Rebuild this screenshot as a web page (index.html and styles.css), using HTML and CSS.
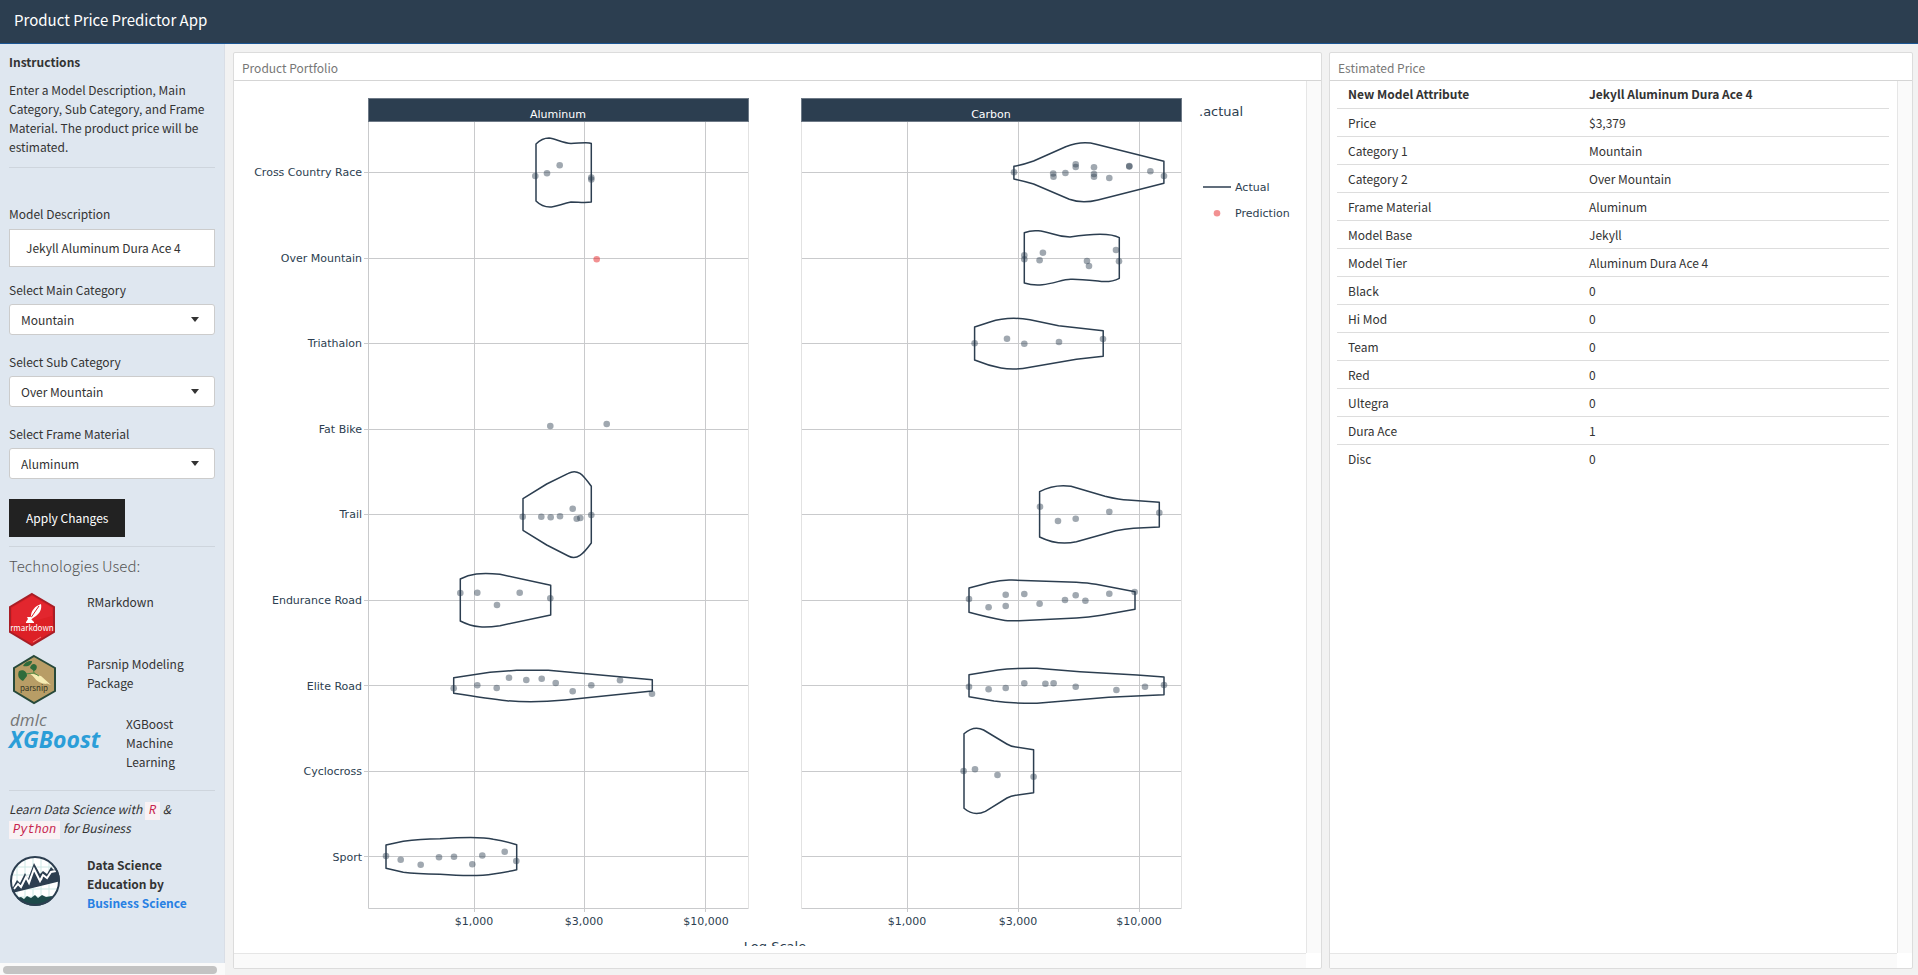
FILE: index.html
```html
<!DOCTYPE html>
<html lang="en">
<head>
<meta charset="utf-8">
<title>Product Price Predictor App</title>
<link rel="stylesheet" href="styles.css">
</head>
<body>
<header class="navbar"><h1 class="brand">Product Price Predictor App</h1></header>
<div class="layout">
  <aside class="sidebar">
    <div class="sidebar-body">
      <h2 class="heading">Instructions</h2>
      <p class="intro">Enter a Model Description, Main Category, Sub Category, and Frame Material. The product price will be estimated.</p>
      <hr class="rule">
      <form class="form">
        <div class="field field-first">
          <label for="model">Model Description</label>
          <input id="model" class="control text-control" type="text" value="Jekyll Aluminum Dura Ace 4">
        </div>
        <div class="field">
          <label for="main-cat">Select Main Category</label>
          <div class="select-wrap"><select id="main-cat" class="control"><option>Mountain</option></select></div>
        </div>
        <div class="field">
          <label for="sub-cat">Select Sub Category</label>
          <div class="select-wrap"><select id="sub-cat" class="control"><option>Over Mountain</option></select></div>
        </div>
        <div class="field">
          <label for="frame">Select Frame Material</label>
          <div class="select-wrap"><select id="frame" class="control"><option>Aluminum</option></select></div>
        </div>
        <button class="apply" type="button">Apply Changes</button>
      </form>
      <hr class="rule rule-tight">
      <h3 class="tech-title">Technologies Used:</h3>
      <div class="tech tech-r">
        <svg class="logo" width="48" height="54" viewBox="0 0 48 54" role="img" aria-label="rmarkdown">
          <path d="M23 2 45 15V40L23 53 1 40V15Z" fill="#dd2026" stroke="#a81e26" stroke-width="2"/>
          <path d="M3 16 23 4 43 16V24L3 35Z" fill="#e62c33" opacity=".6"/>
          <path d="M32 12C33 17 31 21 27 24L24 26 19 30 22 24C22 19 26 14 32 12Z" fill="#fff"/>
          <path d="M30 14 19 30" stroke="#dd2026" stroke-width="1"/>
          <path d="M18 25H23L22 27 25 30V31H17V30L19 27Z" fill="#fff"/>
          <path d="M24 50 32 45" stroke="#f08080" stroke-width="1"/>
          <text class="hex-text" x="23" y="39" text-anchor="middle" fill="#fff">rmarkdown</text>
        </svg>
        <span>RMarkdown</span>
      </div>
      <div class="tech tech-p">
        <svg class="logo" width="48" height="50" viewBox="0 0 48 50" role="img" aria-label="parsnip">
          <path d="M25 2 46 14V37L25 49 5 37V14Z" fill="#b89d66" stroke="#27493a" stroke-width="2"/>
          <path d="M20 19 32 22 42 31 29 26Z" fill="#f7edb4"/>
          <path d="M24 22Q28 20 32 23L38 30Q29 30 24 22Z" fill="#f7edb4"/>
          <path d="M30 22 25 19 16 20M25 19 24 13" fill="none" stroke="#4f8a43" stroke-width="1"/>
          <path d="M14 12C17 7 20 7 23 7 23 11 19 13 14 12ZM21 14C22 10 25 9 27 11 29 13 27 17 25 17ZM10 17C15 15 18 18 18 22L14 27C10 25 8 22 10 17Z" fill="#2f6b3b"/>
          <text class="hex-text" x="25" y="37" text-anchor="middle" fill="#333524">parsnip</text>
        </svg>
        <span>Parsnip Modeling Package</span>
      </div>
      <div class="tech tech-x">
        <svg class="logo" width="92" height="38" viewBox="0 0 92 38" role="img" aria-label="dmlc XGBoost">
          <text class="dmlc" x="1" y="12">dmlc</text>
          <text class="xgb" x="0" y="34">XGBoost</text>
        </svg>
        <span>XGBoost Machine Learning</span>
      </div>
      <hr class="rule rule-wide">
      <p class="learn">Learn Data Science with <code>R</code> &amp; <code>Python</code> for Business</p>
      <div class="tech tech-b">
        <svg class="logo" width="52" height="52" viewBox="0 0 52 52" role="img" aria-label="Business Science">
          <defs><clipPath id="disc"><circle cx="26" cy="26" r="25"/></clipPath></defs>
          <circle cx="26" cy="26" r="24" fill="#fff"/>
          <g clip-path="url(#disc)">
            <path d="M8 0V52M16 0V52M24 0V52M32 0V52M40 0V52M0 12H52M0 20H52M0 34H52M0 42H52" stroke="#cfe9e6" stroke-width="1"/>
            <path d="M3 34 8 25 11 28 16 18 19 24 25 8 31 19 34 16 38 19 42 12 45 15 52 9V26L3 38Z" fill="#2c3e50"/>
            <path d="M5 34 9 29 12 32 17 22 20 28 25 14 31 26 34 20 38 23 42 17 47 16M20 28 22 22M31 26 33 23" fill="none" stroke="#fff" stroke-width="2"/>
            <path d="M8 43 12 42 15 44 18 41 22 43 26 40 29 43 33 40 37 42 43 41 41 52H12Z" fill="#1d4a4a"/>
          </g>
          <circle cx="26" cy="26" r="24" fill="none" stroke="#2c3e50" stroke-width="2"/>
        </svg>
        <strong>Data Science Education by <a href="#">Business Science</a></strong>
      </div>
    </div>
    <div class="hscroll"><div class="hthumb"></div></div>
  </aside>
  <main class="panels">
    <section class="panel">
      <h2 class="panel-title">Product Portfolio</h2>
      <div class="panel-body">
        <svg class="chart" viewBox="234 81 1072 872" preserveAspectRatio="xMinYMin meet" role="img" aria-label="Product Portfolio">
          <defs><clipPath id="plot"><rect x="234" y="81" width="1072" height="865"/></clipPath></defs>
          <g class="grid">
            <path d="M364 172.500H748M364 258.500H748M364 343.500H748M364 429.500H748M364 514.500H748M364 600.500H748M364 685.500H748M364 771.500H748M364 856.500H748"/>
            <path d="M802 172.500H1181M802 258.500H1181M802 343.500H1181M802 429.500H1181M802 514.500H1181M802 600.500H1181M802 685.500H1181M802 771.500H1181M802 856.500H1181"/>
            <path d="M474.500 122V912M584.500 122V912M705.500 122V912M907.500 122V912M1018.500 122V912M1139.500 122V912"/>
            <path d="M368.500 122V908.500H748M802 908.500H1181"/>
            <path class="faint" d="M748.500 122V909M801.500 122V909M1181.500 122V909"/>
          </g>
          <g class="strip"><rect x="368.500" y="98.500" width="380" height="23"/><rect x="801.500" y="98.500" width="380" height="23"/></g>
          <g class="violin">
            <path d="M536 144C541 139 546 138 549 138C556 139 563 143 571 143.500C578 143.500 588 141.500 591.300 143.500V202C585 203 578 202 571 202C562 204 554 207 550 207C544 207 540 205 536 201Z"/>
            <path d="M523 498.700L546.700 484L568.300 473.300Q574.300 470 580 473.300Q584 476 591.300 486.300V543Q584 553 580 555.300Q574.300 559.500 568.300 556L546.700 545L523 530.300Z"/>
            <path d="M460.300 579C470 574 480 572.500 500 574.300L550.700 585.300V615L500 625.700C485 628 474 628 460.300 621Z"/>
            <path d="M453.700 677.700L490 672.300L516.700 670.300H548.300L652.300 679.700V691L565 700Q533 703 506.700 700.700Q490 699 453.700 693.300Z"/>
            <path d="M386 845L403.300 841.300Q420 839 440 838.700Q480 836 493.300 839.300Q505 841 516.700 844.700V869.700Q505 872.500 493.300 874Q476 877 440 874.300Q415 874 403.300 872.300L386 868.300Z"/>
            <path d="M1013.900 166.300Q1024 164.500 1033.600 161L1065.700 146.700Q1082 140.500 1096 144.300L1139 155L1163.900 161.300V183.300L1097.900 200Q1082 204 1069.300 199.300L1033.600 184Q1024 181 1013.900 179Z"/>
            <path d="M1024.300 232.700C1034 229 1042 231 1053 234Q1062 237 1070 237Q1108 231 1119.300 237.700V278.300Q1110 283 1098 281Q1077 279 1071 279.300C1060 279 1044 289 1024.300 283Z"/>
            <path d="M974.600 327L990 322Q1008 316 1030 319.700L1058.600 325.700L1103.200 330.700V356.300L1076.400 359.300L1030 367.300Q1014 370.500 1001 368Q988 365.500 974.600 360Z"/>
            <path d="M1039.600 491.700Q1054 484 1071 486.300L1105 496.300Q1120 500 1128 500L1159.300 502.300V527L1133.600 528.300Q1125 529 1115.700 530.700L1076.400 541.700Q1058 546 1039.600 537Z"/>
            <path d="M969 588L990 582.500Q1002 579.500 1012 580L1076.400 582.300Q1088 583 1096 584.300L1135 591.700V609.300L1101.400 615.300Q1088 617.500 1076.400 618L1019.300 620.700Q1008 621 1005 620.500Q990 618 969 612.300Z"/>
            <path d="M969 674.700L997.900 670Q1012 668 1037 668.300L1080 671.700L1137 675L1164 677V694.700L1108.600 697.300L1037 703.300Q1012 703.500 994 701L969 696.700Z"/>
            <path d="M964 733.700Q974 725 983.600 730L1006.800 744Q1011 746.500 1015.700 747L1033.600 749.700V792.700L1015.700 795.300Q1011 796 1007 798L985.400 811.300Q974 817 964 808.300Z"/>
          </g>
          <g class="dots">
            <circle cx="535.300" cy="176" r="3.300"/><circle cx="547" cy="173.300" r="3.300"/><circle cx="559.700" cy="165.300" r="3.300"/><circle cx="591.300" cy="177.500" r="3.300"/><circle cx="591.300" cy="179.500" r="3.300"/>
            <circle cx="550.300" cy="426" r="3.300"/><circle cx="606.700" cy="424" r="3.300"/>
            <circle cx="522.700" cy="516.700" r="3.300"/><circle cx="541.300" cy="516.700" r="3.300"/><circle cx="550.700" cy="517.300" r="3.300"/><circle cx="560" cy="516.300" r="3.300"/><circle cx="572.700" cy="508.700" r="3.300"/><circle cx="576.700" cy="518.700" r="3.300"/><circle cx="580.300" cy="518" r="3.300"/><circle cx="591.300" cy="515" r="3.300"/>
            <circle cx="460.300" cy="593" r="3.300"/><circle cx="477.300" cy="592.700" r="3.300"/><circle cx="497" cy="605" r="3.300"/><circle cx="519.700" cy="592.700" r="3.300"/><circle cx="550.300" cy="598.300" r="3.300"/>
            <circle cx="453.700" cy="688.300" r="3.300"/><circle cx="477.300" cy="685.300" r="3.300"/><circle cx="496.700" cy="688" r="3.300"/><circle cx="509" cy="677.700" r="3.300"/><circle cx="526.300" cy="680" r="3.300"/><circle cx="541.700" cy="678.700" r="3.300"/><circle cx="555.700" cy="683" r="3.300"/><circle cx="572.700" cy="691.300" r="3.300"/><circle cx="591.300" cy="685.300" r="3.300"/><circle cx="620" cy="680.300" r="3.300"/><circle cx="652" cy="693.700" r="3.300"/>
            <circle cx="386" cy="856" r="3.300"/><circle cx="400.700" cy="859.700" r="3.300"/><circle cx="420.700" cy="864.700" r="3.300"/><circle cx="439" cy="857.300" r="3.300"/><circle cx="454" cy="856.700" r="3.300"/><circle cx="472.300" cy="864.300" r="3.300"/><circle cx="482.300" cy="855.500" r="3.300"/><circle cx="504.700" cy="851.700" r="3.300"/><circle cx="516.300" cy="861" r="3.300"/>
            <circle cx="1014" cy="172.300" r="3.300"/><circle cx="1053.200" cy="173.500" r="3.300"/><circle cx="1053.500" cy="176.700" r="3.300"/><circle cx="1065.400" cy="173" r="3.300"/><circle cx="1075.700" cy="164.300" r="3.300"/><circle cx="1075.700" cy="167" r="3.300"/><circle cx="1094" cy="167.300" r="3.300"/><circle cx="1094" cy="174" r="3.300"/><circle cx="1094" cy="176.700" r="3.300"/><circle cx="1109.300" cy="178" r="3.300"/><circle cx="1129.300" cy="166" r="3.300"/><circle cx="1129.300" cy="166.600" r="3.300"/><circle cx="1150.400" cy="171.300" r="3.300"/><circle cx="1164" cy="176" r="3.300"/>
            <circle cx="1024.300" cy="255.300" r="3.300"/><circle cx="1024.300" cy="259.300" r="3.300"/><circle cx="1042.900" cy="252.700" r="3.300"/><circle cx="1039.600" cy="260.300" r="3.300"/><circle cx="1087" cy="261" r="3.300"/><circle cx="1089" cy="266" r="3.300"/><circle cx="1116" cy="250" r="3.300"/><circle cx="1119" cy="261.300" r="3.300"/>
            <circle cx="974.600" cy="343.300" r="3.300"/><circle cx="1007" cy="338.700" r="3.300"/><circle cx="1024.300" cy="343.700" r="3.300"/><circle cx="1059" cy="342" r="3.300"/><circle cx="1103" cy="339" r="3.300"/>
            <circle cx="1040" cy="506.700" r="3.300"/><circle cx="1058" cy="521" r="3.300"/><circle cx="1075.700" cy="518.700" r="3.300"/><circle cx="1109.300" cy="511.700" r="3.300"/><circle cx="1159.300" cy="512.700" r="3.300"/>
            <circle cx="969" cy="599" r="3.300"/><circle cx="988.600" cy="607.300" r="3.300"/><circle cx="1005.700" cy="594.700" r="3.300"/><circle cx="1005.700" cy="606" r="3.300"/><circle cx="1024.300" cy="594" r="3.300"/><circle cx="1039.600" cy="603.700" r="3.300"/><circle cx="1065" cy="600" r="3.300"/><circle cx="1075.700" cy="595.300" r="3.300"/><circle cx="1085.400" cy="600.700" r="3.300"/><circle cx="1109.300" cy="593.700" r="3.300"/><circle cx="1134.600" cy="592" r="3.300"/>
            <circle cx="969" cy="686.700" r="3.300"/><circle cx="988.600" cy="689.300" r="3.300"/><circle cx="1005.700" cy="688" r="3.300"/><circle cx="1024.300" cy="683.300" r="3.300"/><circle cx="1045.400" cy="683.700" r="3.300"/><circle cx="1053.600" cy="683.300" r="3.300"/><circle cx="1075.700" cy="686.700" r="3.300"/><circle cx="1116.400" cy="690" r="3.300"/><circle cx="1145" cy="686.700" r="3.300"/><circle cx="1164" cy="685" r="3.300"/>
            <circle cx="963.600" cy="771" r="3.300"/><circle cx="975" cy="769.300" r="3.300"/><circle cx="997.500" cy="775" r="3.300"/><circle cx="1033.600" cy="776.700" r="3.300"/>
          </g>
          <g class="pred"><circle cx="596.700" cy="259.300" r="3.300"/><circle cx="1217" cy="213.300" r="3.300"/></g>
          <path class="key" d="M1203 187H1231"/>
          <g class="labels row-labels">
            <text x="362" y="176">Cross Country Race</text>
            <text x="362" y="262">Over Mountain</text>
            <text x="362" y="347">Triathalon</text>
            <text x="362" y="433">Fat Bike</text>
            <text x="362" y="518">Trail</text>
            <text x="362" y="604">Endurance Road</text>
            <text x="362" y="690">Elite Road</text>
            <text x="362" y="775">Cyclocross</text>
            <text x="362" y="861">Sport</text>
          </g>
          <g class="labels tick-labels">
            <text x="474" y="925">$1,000</text><text x="584" y="925">$3,000</text><text x="706" y="925">$10,000</text>
            <text x="907" y="925">$1,000</text><text x="1018" y="925">$3,000</text><text x="1139" y="925">$10,000</text>
            <text class="strip-label" x="558" y="118">Aluminum</text><text class="strip-label" x="991" y="118">Carbon</text>
          </g>
          <g class="labels"><text x="1235" y="191">Actual</text><text x="1235" y="217">Prediction</text></g>
          <g class="titles" clip-path="url(#plot)"><text x="1199" y="116">.actual</text><text x="775" y="951" text-anchor="middle">Log Scale</text></g>
        </svg>
      </div>
      <div class="track track-v"></div>
      <div class="track track-h"></div>
    </section>
    <section class="panel">
      <h2 class="panel-title">Estimated Price</h2>
      <div class="panel-body">
        <table class="attrs">
          <thead><tr><th>New Model Attribute</th><th>Jekyll Aluminum Dura Ace 4</th></tr></thead>
          <tbody>
            <tr><td>Price</td><td>$3,379</td></tr>
            <tr><td>Category 1</td><td>Mountain</td></tr>
            <tr><td>Category 2</td><td>Over Mountain</td></tr>
            <tr><td>Frame Material</td><td>Aluminum</td></tr>
            <tr><td>Model Base</td><td>Jekyll</td></tr>
            <tr><td>Model Tier</td><td>Aluminum Dura Ace 4</td></tr>
            <tr><td>Black</td><td>0</td></tr>
            <tr><td>Hi Mod</td><td>0</td></tr>
            <tr><td>Team</td><td>0</td></tr>
            <tr><td>Red</td><td>0</td></tr>
            <tr><td>Ultegra</td><td>0</td></tr>
            <tr><td>Dura Ace</td><td>1</td></tr>
            <tr><td>Disc</td><td>0</td></tr>
          </tbody>
        </table>
      </div>
      <div class="track track-v"></div>
      <div class="track track-h"></div>
    </section>
  </main>
</div>
</body>
</html>
```

FILE: styles.css
```css
* { box-sizing: border-box; }
body {
  margin: 0;
  min-height: 100vh;
  display: flex;
  flex-direction: column;
  background: #f2f2f2;
  color: #333;
  font: 12px/19px "Noto Sans CJK SC", "Noto Sans", sans-serif;
}
h1, h2, h3, p { margin: 0; font-size: inherit; font-weight: 400; }
.navbar {
  height: 44px;
  padding: 0 14px;
  display: flex;
  align-items: center;
  background: #2c3e50;
  border-bottom: 1px solid #1b5694;
}
.brand { color: #fff; font-size: 15px; line-height: 24px; padding-bottom: 4px; }
.layout { flex: 1; display: flex; }
.sidebar {
  width: 225px;
  flex: none;
  display: flex;
  flex-direction: column;
  background: #fafafa;
}
.sidebar-body { flex: 1; padding: 8px 9px 0; background: #dfe7f0; border-right: 1px solid #d9dee6; }
.heading { font-weight: 700; margin-bottom: 9px; }
.rule { border: 0; border-top: 1px solid #ced5dd; margin: 11px 0 0; }
.rule-tight { margin-top: 9px; }
.rule-wide { margin-top: 19px; }
.form { margin-top: 36px; }
.field { display: flex; flex-direction: column; gap: 5px; margin-bottom: 17px; }
.field-first { gap: 6px; margin-bottom: 13px; }
.control {
  width: 100%;
  height: 31px;
  padding: 0 11px 1px;
  border: 1px solid #ccc;
  border-radius: 3px;
  background: #fff;
  color: #333;
  font: inherit;
  appearance: none;
}
.text-control { height: 38px; padding: 0 16px 2px; border-radius: 0; }
.select-wrap { position: relative; }
.select-wrap::after {
  content: "";
  position: absolute;
  right: 16px;
  top: 13px;
  border: 4px solid transparent;
  border-top: 5px solid #333;
  border-bottom: 0;
  pointer-events: none;
}
.apply {
  display: block;
  height: 38px;
  margin-top: 20px;
  padding: 0 17px 2px;
  border: 0;
  background: #222;
  color: #fff;
  font: inherit;
}
.tech-title { margin-top: 8px; font-size: 15px; line-height: 22px; font-weight: 300; color: #555; }
.tech { display: flex; align-items: flex-start; }
.tech .logo { flex: none; margin-right: 30px; overflow: visible; }
.tech-r { margin-top: 15px; }
.tech-p { margin-top: 8px; }
.tech-x { margin-top: 10px; }
.tech-b { margin-top: 18px; }
.tech-x .logo { margin-right: 25px; }
.tech-b .logo { margin-right: 26px; }
.tech a { color: #2780e3; text-decoration: none; }
.hex-text { font: 8px "Noto Sans CJK SC", sans-serif; }
.dmlc { font: italic 17px "Open Sans", sans-serif; fill: #777; }
.xgb { font: italic 700 23px "Open Sans", sans-serif; fill: #2b9ed8; }
.learn { margin-top: 8px; font-style: italic; }
.learn code {
  padding: 2px 4px;
  background: #f9f2f4;
  color: #c7254e;
  font: italic 12px/14px "Liberation Mono", monospace;
}
.hscroll { height: 13px; padding: 3px 8px 2px 3px; }
.hthumb { height: 8px; border-radius: 4px; background: #c3c3c3; }
.panels {
  flex: 1;
  min-width: 0;
  padding: 8px 5px 7px 8px;
  display: grid;
  grid-template-columns: 1089fr 584fr;
  gap: 7px;
}
.panel {
  min-width: 0;
  display: grid;
  grid-template: 28px 1fr 15px / minmax(0, 1fr) 15px;
  background: #fff;
  border: 1px solid #dcdcdc;
  border-radius: 2px;
}
.panel-title {
  grid-column: 1 / 3;
  padding: 5px 8px 0;
  border-bottom: 1px solid #d5d5d5;
  color: #777;
}
.panel-body { min-width: 0; }
.track { background: #fafafa; }
.track-v { border-left: 1px solid #e6e6e6; }
.track-h { border-top: 1px solid #e6e6e6; }
.chart { display: block; width: 100%; height: auto; }
.grid path { fill: none; stroke: #c9cacc; }
.grid .faint { stroke: #e2e2e2; }
.strip rect { fill: #2c3e50; stroke: #6d7986; }
.violin path, .key { fill: none; stroke: #2c3e50; stroke-width: 1.5; stroke-linejoin: round; }
.dots circle { fill: #2c3e50; fill-opacity: .45; }
.pred circle { fill: #e31a1c; fill-opacity: .48; }
.labels text { font: 11px "DejaVu Sans", sans-serif; fill: #2c3e50; }
.row-labels text { text-anchor: end; }
.tick-labels text { text-anchor: middle; }
.labels .strip-label { fill: #fff; }
.titles text { font: 13px "DejaVu Sans", sans-serif; fill: #2c3e50; }
.attrs { width: calc(100% - 15px); margin-left: 7px; border-collapse: collapse; table-layout: fixed; }
.attrs th, .attrs td { height: 28px; padding: 0 11px; text-align: left; border-bottom: 1px solid #ddd; }
.attrs thead th { height: 27px; padding-bottom: 1px; }
.attrs th:first-child { width: 241px; }
.attrs tr:last-child td { border-bottom: 0; }
.attrs thead th { border-bottom: 1px solid #ddd; }
```
